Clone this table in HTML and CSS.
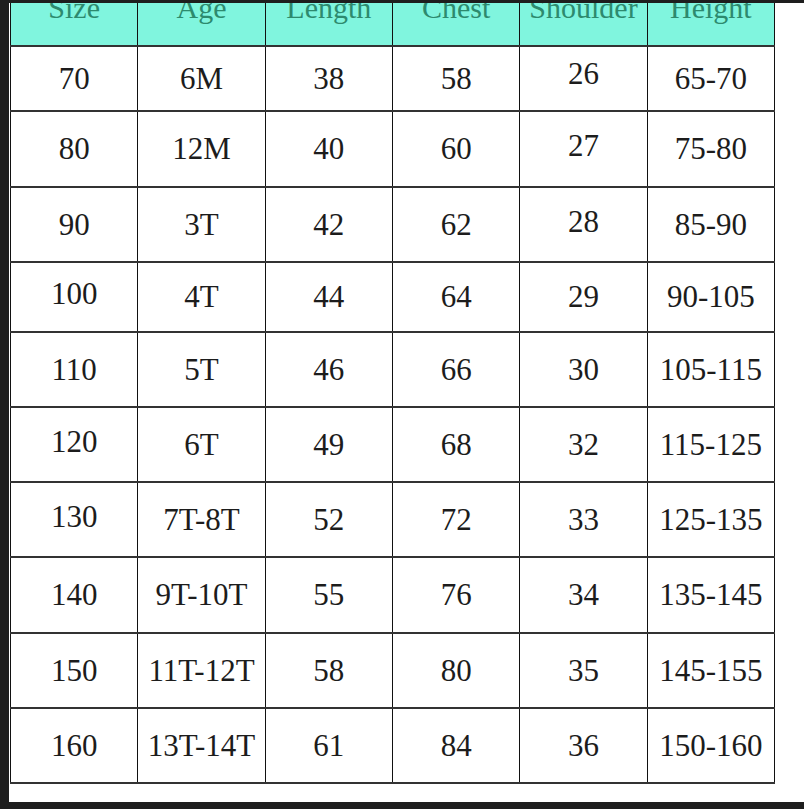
FILE: index.html
```html
<!DOCTYPE html>
<html lang="en">
<head>
<meta charset="utf-8">
<title>Size chart</title>
<link rel="stylesheet" href="styles.css">
</head>
<body>
<div class="frame">
  <div class="paper">
    <table class="chart">
      <colgroup>
        <col class="c"><col class="c"><col class="c"><col class="c"><col class="c"><col class="c">
      </colgroup>
      <thead>
        <tr class="head">
          <th>Size</th><th>Age</th><th>Length</th><th>Chest</th><th>Shoulder</th><th>Height</th>
        </tr>
      </thead>
      <tbody>
        <tr class="r65"><td>70</td><td>6M</td><td>38</td><td>58</td><td class="up2">26</td><td>65-70</td></tr>
        <tr class="r76"><td>80</td><td>12M</td><td>40</td><td>60</td><td class="up">27</td><td>75-80</td></tr>
        <tr class="r75"><td>90</td><td>3T</td><td>42</td><td>62</td><td class="up">28</td><td>85-90</td></tr>
        <tr class="r70"><td class="up">100</td><td>4T</td><td>44</td><td>64</td><td>29</td><td>90-105</td></tr>
        <tr class="r75"><td>110</td><td>5T</td><td>46</td><td>66</td><td>30</td><td>105-115</td></tr>
        <tr class="r75"><td class="up">120</td><td>6T</td><td>49</td><td>68</td><td>32</td><td>115-125</td></tr>
        <tr class="r75"><td class="up">130</td><td>7T-8T</td><td>52</td><td>72</td><td>33</td><td>125-135</td></tr>
        <tr class="r76"><td>140</td><td>9T-10T</td><td>55</td><td>76</td><td>34</td><td>135-145</td></tr>
        <tr class="r75"><td>150</td><td>11T-12T</td><td>58</td><td>80</td><td>35</td><td>145-155</td></tr>
        <tr class="r75"><td>160</td><td>13T-14T</td><td>61</td><td>84</td><td>36</td><td>150-160</td></tr>
      </tbody>
    </table>
  </div>
</div>
</body>
</html>
```
FILE: styles.css
```css
* { box-sizing: border-box; }

html, body {
  margin: 0;
  padding: 0;
  background: #1e1e1e;
}

.frame {
  width: 804px;
  height: 809px;
  background: #1e1e1e;
  padding: 3px 0 7px 9px;
}

.paper {
  height: 799px;
  background: #ffffff;
  overflow: hidden;
  padding-left: 1px;
}

.chart {
  width: 765px;
  table-layout: fixed;
  border-collapse: collapse;
  margin-top: -17px;
  font-family: "Liberation Serif", "Times New Roman", serif;
  font-size: 31px;
  color: #1c1c1c;
}

.chart th,
.chart td {
  border-left: 1px solid #111;
  border-right: 1px solid #111;
  border-top: 2px solid #333;
  border-bottom: 2px solid #333;
  text-align: center;
  padding: 0;
  font-weight: normal;
}

.head th {
  height: 60px;
  background: #80f5de;
  color: #2d8a6e;
  vertical-align: top;
  padding-top: 7px;
  line-height: 30px;
  font-size: 30px;
  border-top: none;
}

.chart td {
  vertical-align: middle;
  line-height: 30px;
}

.chart td.up {
  padding-bottom: 6px;
}

.chart td.up2 {
  padding-bottom: 9px;
}

.r65 td { height: 65px; }
.r70 td { height: 70px; }
.r75 td { height: 75px; }
.r76 td { height: 76px; }
```
